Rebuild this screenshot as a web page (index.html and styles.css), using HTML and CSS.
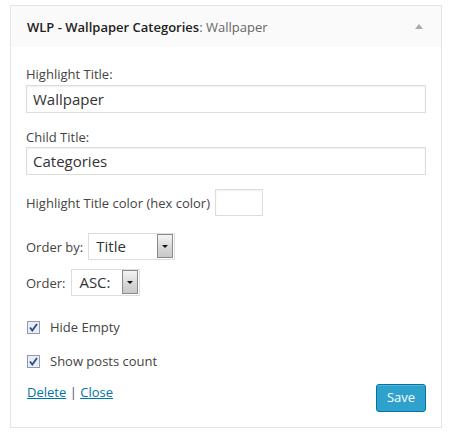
FILE: index.html
```html
<!DOCTYPE html>
<html>
<head>
<meta charset="utf-8">
<link rel="stylesheet" href="styles.css">
</head>
<body>
<div class="widget">
  <div class="widget-top">
    <h3 class="widget-title">WLP - Wallpaper Categories<span class="in-title">: Wallpaper</span></h3>
    <span class="toggle"></span>
  </div>
  <div class="widget-inside">
    <label class="lbl lbl-first">Highlight Title:</label>
    <div class="text-input">Wallpaper</div>
    <label class="lbl lbl-second">Child Title:</label>
    <div class="text-input">Categories</div>
    <div class="row row-hex">
      <span>Highlight Title color (hex color)</span>
      <span class="small-input"></span>
    </div>
    <div class="row row-orderby">
      <span>Order by:</span>
      <span class="select select-wide"><span class="select-text">Title</span><span class="select-btn"><span class="tri"></span></span></span>
    </div>
    <div class="row row-order">
      <span>Order:</span>
      <span class="select select-narrow"><span class="select-text">ASC:</span><span class="select-btn"><span class="tri"></span></span></span>
    </div>
    <div class="check check-first">
      <svg class="cb" width="13" height="13" viewBox="0 0 13 13"><rect x="0.5" y="0.5" width="12" height="12" fill="#e8ecf4" stroke="#8f9bb3"/><path d="M3 6.5 L5.3 9.5 L10 3" fill="none" stroke="#2a4a8c" stroke-width="1.8"/></svg>
      <span>Hide Empty</span>
    </div>
    <div class="check check-second">
      <svg class="cb" width="13" height="13" viewBox="0 0 13 13"><rect x="0.5" y="0.5" width="12" height="12" fill="#e8ecf4" stroke="#8f9bb3"/><path d="M3 6.5 L5.3 9.5 L10 3" fill="none" stroke="#2a4a8c" stroke-width="1.8"/></svg>
      <span>Show posts count</span>
    </div>
    <div class="footer">
      <div class="links"><a href="#">Delete</a> <span class="sep">|</span> <a href="#">Close</a></div>
      <span class="btn-save">Save</span>
    </div>
  </div>
</div>
</body>
</html>
```
FILE: styles.css
```css
html, body {
  margin: 0;
  padding: 0;
  background: #fff;
}
body {
  padding: 5px 8px 0 10px;
  font-family: "Open Sans", "Liberation Sans", sans-serif;
  font-size: 13px;
  color: #444;
}
.widget {
  width: 430px;
  border: 1px solid #e5e5e5;
  background: #fff;
}
.widget-top {
  height: 41px;
  background: #fafafa;
  display: flex;
  align-items: center;
  justify-content: space-between;
  padding: 0 18px 0 16px;
}
.widget-title {
  margin: 0;
  font-size: 13px;
  font-weight: 600;
  color: #222;
  line-height: 20px;
}
.in-title {
  font-weight: 400;
  color: #666;
}
.toggle {
  width: 0;
  height: 0;
  border-left: 4px solid transparent;
  border-right: 4px solid transparent;
  border-bottom: 5px solid #aaa;
  margin-top: -1px;
}
.widget-inside {
  padding: 18px 15px 15px 15px;
  display: flex;
  flex-direction: column;
}
.lbl {
  display: block;
  line-height: 18px;
  color: #444;
}
.lbl-first { margin-bottom: 2px; }
.lbl-second { margin-top: 15px; margin-bottom: 1px; }
.text-input {
  height: 26px;
  border: 1px solid #ddd;
  box-shadow: inset 0 1px 2px rgba(0,0,0,0.07);
  font-size: 15px;
  line-height: 26px;
  padding: 0 6px;
  color: #333;
}
.row {
  display: flex;
  align-items: center;
  gap: 5px;
}
.row-hex { margin-top: 14px; }
.row-orderby { margin-top: 17px; }
.row-order { margin-top: 9px; }
.small-input {
  width: 46px;
  height: 25px;
  border: 1px solid #ddd;
  box-shadow: inset 0 1px 2px rgba(0,0,0,0.07);
}
.select {
  display: flex;
  align-items: stretch;
  height: 25px;
  border: 1px solid #ddd;
  padding: 0 1px 0 0;
  background: #fff;
}
.select-wide { width: 84px; }
.select-narrow { width: 66px; margin-left: 1px; }
.select-text {
  flex: 1;
  padding-left: 7px;
  font-size: 15px;
  line-height: 25px;
  color: #333;
}
.select-btn {
  width: 14px;
  margin: 0 0 1px 0;
  border: 1px solid #8a8a8a;
  background: linear-gradient(#f4f4f4, #d6d6d6 60%, #c9c9c9);
  display: flex;
  align-items: center;
  justify-content: center;
}
.tri {
  width: 0;
  height: 0;
  border-left: 3px solid transparent;
  border-right: 3px solid transparent;
  border-top: 3px solid #111;
}
.check {
  display: flex;
  align-items: center;
  line-height: 18px;
  padding-left: 1px;
  gap: 10px;
  color: #444;
}
.check-first { margin-top: 22px; }
.check-second { margin-top: 16px; }
.cb { display: block; }
.footer {
  margin-top: 14px;
  display: flex;
  justify-content: space-between;
  align-items: flex-start;
}
.links {
  line-height: 16px;
  color: #444;
  padding-left: 1px;
}
.links a {
  color: #0074a2;
  text-decoration: underline;
}
.sep { color: #555; }
.btn-save {
  width: 48px;
  height: 26px;
  line-height: 25px;
  text-align: center;
  font-size: 13px;
  color: #fff;
  background: #2ea2cc;
  border: 1px solid #0074a2;
  border-radius: 3px;
  box-shadow: inset 0 1px 0 rgba(120,200,230,0.5);
}
```
